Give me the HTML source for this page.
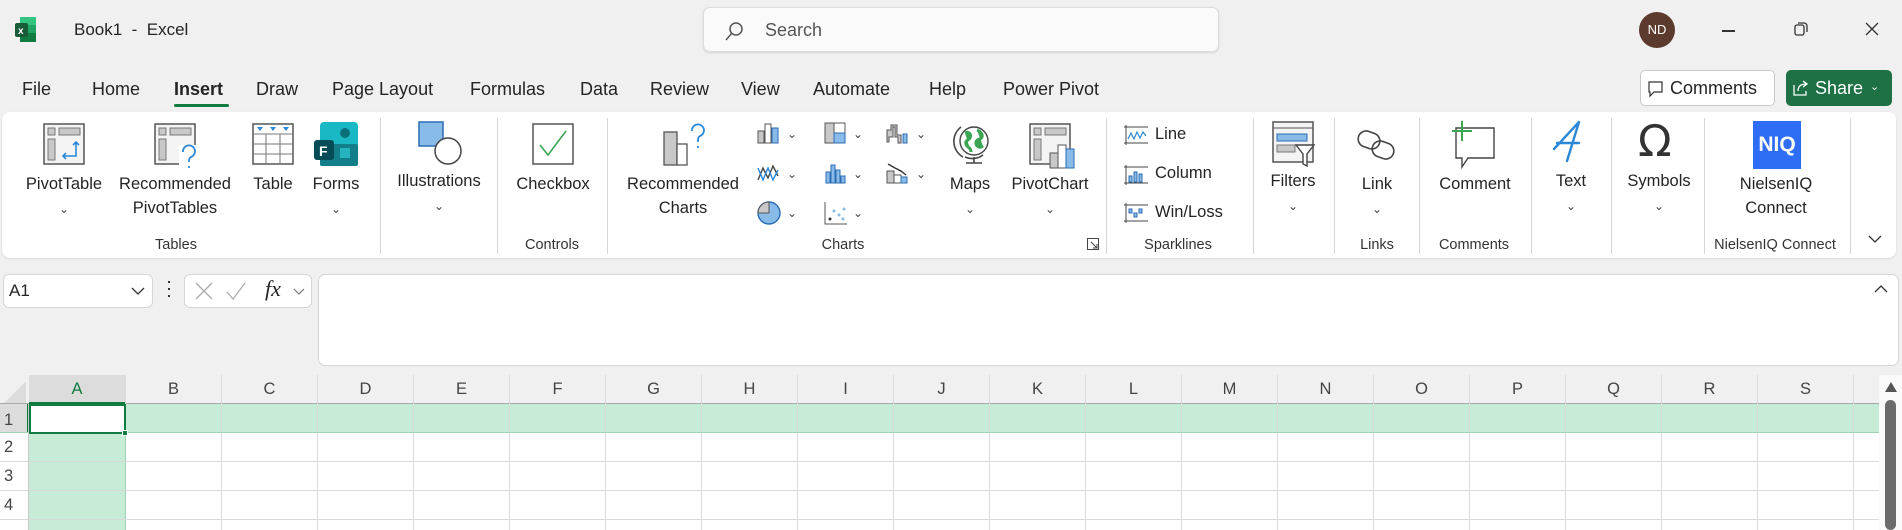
<!DOCTYPE html>
<html><head><meta charset="utf-8"><style>
*{box-sizing:border-box;margin:0;padding:0}
body{width:1902px;height:530px;background:#f0f0f0;font-family:"Liberation Sans",sans-serif;color:#242424;position:relative;overflow:hidden}
.a{position:absolute}
.t{position:absolute;font-size:18px;top:79px;white-space:nowrap}
.l{position:absolute;font-size:16.5px;white-space:nowrap;text-align:center;line-height:24px;transform:translateX(-50%)}
.g{position:absolute;font-size:14.5px;top:237px;white-space:nowrap;transform:translateX(-50%);color:#333}
.sep{position:absolute;top:118px;width:1px;height:136px;background:#d6d6d6}
.ch{font-size:12px;color:#444}
.col{position:absolute;top:375px;height:29px;border-left:1px solid #dadada;font-size:16.5px;text-align:center;line-height:29px;color:#444}
svg{position:absolute;overflow:visible}
</style></head><body>
<!-- title bar -->
<svg style="left:14px;top:16px" width="24" height="28" viewBox="0 0 24 28"><rect x="6" y="1" width="16" height="25" rx="2" fill="#21a366"/><rect x="6" y="1" width="16" height="8" fill="#33c481"/><rect x="6" y="17" width="16" height="9" fill="#107c41"/><rect x="1" y="7" width="13" height="14" rx="2" fill="#185c37"/><text x="4" y="18" font-size="10" font-weight="bold" fill="#fff" font-family="Liberation Sans">x</text></svg>
<div class="a" style="left:74px;top:20px;font-size:17px">Book1&nbsp; - &nbsp;Excel</div>
<div class="a" style="left:703px;top:7px;width:516px;height:45px;background:#fafafa;border:1px solid #dcdcdc;border-radius:7px;box-shadow:0 1px 2px rgba(0,0,0,.12)"></div>
<svg style="left:724px;top:21px" width="20" height="20"><circle cx="12" cy="8" r="6" fill="none" stroke="#555" stroke-width="1.5"/><line x1="8" y1="12" x2="2" y2="19" stroke="#555" stroke-width="1.5"/></svg>
<div class="a" style="left:765px;top:20px;font-size:18px;color:#555">Search</div>
<div class="a" style="left:1639px;top:12px;width:36px;height:36px;border-radius:50%;background:#5c3a2e;color:#fff;font-size:13px;text-align:center;line-height:36px">ND</div>
<div class="a" style="left:1722px;top:30px;width:13px;height:1.5px;background:#333"></div>
<svg style="left:1794px;top:22px" width="14" height="14"><rect x="1" y="3" width="9" height="10" rx="2" fill="none" stroke="#333" stroke-width="1.3"/><path d="M4 1h6a3 3 0 0 1 3 3v6" fill="none" stroke="#333" stroke-width="1.3"/></svg>
<svg style="left:1865px;top:22px" width="14" height="14"><path d="M1 1L13 13M13 1L1 13" stroke="#333" stroke-width="1.3"/></svg>
<!-- tabs -->
<div class="t" style="left:22px">File</div>
<div class="t" style="left:92px">Home</div>
<div class="t" style="left:174px;font-weight:bold">Insert</div>
<div class="a" style="left:174px;top:104px;width:55px;height:3px;border-radius:2px;background:#107c41"></div>
<div class="t" style="left:256px">Draw</div>
<div class="t" style="left:332px">Page Layout</div>
<div class="t" style="left:470px">Formulas</div>
<div class="t" style="left:580px">Data</div>
<div class="t" style="left:650px">Review</div>
<div class="t" style="left:741px">View</div>
<div class="t" style="left:813px">Automate</div>
<div class="t" style="left:929px">Help</div>
<div class="t" style="left:1003px">Power Pivot</div>
<div class="a" style="left:1640px;top:70px;width:135px;height:36px;border:1px solid #c8c8c8;border-radius:5px;background:#fff"></div>
<svg style="left:1648px;top:81px" width="16" height="16"><path d="M1 1h13v10H6l-4 4V11H1z" fill="none" stroke="#333" stroke-width="1.2"/></svg>
<div class="a" style="left:1670px;top:78px;font-size:18px">Comments</div>
<div class="a" style="left:1786px;top:70px;width:106px;height:36px;border-radius:5px;background:#1e7145"></div>
<svg style="left:1792px;top:79px" width="18" height="18"><path d="M2 6v10h12v-4M6 12c0-5 3-7 8-7M11 2l4 3-4 3" fill="none" stroke="#fff" stroke-width="1.3"/></svg>
<div class="a" style="left:1815px;top:78px;font-size:18px;color:#fff">Share</div>
<div class="a" style="left:1870px;top:80px;font-size:11px;color:#fff">&#8964;</div>
<!-- ribbon -->
<div class="a" style="left:2px;top:112px;width:1894px;height:146px;background:#fff;border-radius:8px;box-shadow:0 1px 2px rgba(0,0,0,.1)"></div>
<div class="sep" style="left:380px"></div><div class="sep" style="left:497px"></div><div class="sep" style="left:607px"></div><div class="sep" style="left:1106px"></div><div class="sep" style="left:1253px"></div><div class="sep" style="left:1334px"></div><div class="sep" style="left:1419px"></div><div class="sep" style="left:1531px"></div><div class="sep" style="left:1611px"></div><div class="sep" style="left:1704px"></div><div class="sep" style="left:1850px"></div>
<!-- PivotTable -->
<svg style="left:43px;top:123px" width="42" height="42"><rect x="1" y="1" width="40" height="40" fill="#f4f4f4" stroke="#555" stroke-width="1.5"/><rect x="5" y="5" width="7" height="7" fill="#c8c8c8" stroke="#777"/><rect x="16" y="5" width="21" height="7" fill="#c8c8c8" stroke="#777"/><rect x="5" y="16" width="7" height="21" fill="#c8c8c8" stroke="#777"/><path d="M33 19v14H20M30 22l3-3 3 3M23 30l-3 3 3 3" fill="none" stroke="#2b88d8" stroke-width="1.6"/></svg>
<div class="l" style="left:64px;top:172px">PivotTable<br><span class="ch">&#8964;</span></div>
<svg style="left:154px;top:123px" width="46" height="46"><rect x="1" y="1" width="40" height="40" fill="#f4f4f4" stroke="#555" stroke-width="1.5"/><rect x="5" y="5" width="7" height="7" fill="#c8c8c8" stroke="#777"/><rect x="16" y="5" width="21" height="7" fill="#c8c8c8" stroke="#777"/><rect x="5" y="16" width="7" height="21" fill="#c8c8c8" stroke="#777"/><rect x="25" y="22" width="20" height="24" fill="#fff"/><path d="M29 29a6 6 0 1 1 8 5c-2 1-2 3-2 5M35 43v2" fill="none" stroke="#2b88d8" stroke-width="1.8"/></svg>
<div class="l" style="left:175px;top:172px">Recommended<br>PivotTables</div>
<svg style="left:252px;top:123px" width="42" height="42"><rect x="1" y="1" width="40" height="40" fill="#fff" stroke="#555" stroke-width="1.5"/><path d="M1 11h40M1 21h40M1 31h40M14 11v30M28 11v30" stroke="#777"/><path d="M5 4h6l-3 4zM18 4h6l-3 4zM31 4h6l-3 4z" fill="#2b88d8"/></svg>
<div class="l" style="left:273px;top:172px">Table</div>
<svg style="left:314px;top:122px" width="44" height="44"><rect x="6" y="0" width="38" height="44" rx="4" fill="#1ab8c4"/><rect x="6" y="22" width="38" height="22" rx="2" fill="#117e8a"/><circle cx="31" cy="11" r="5" fill="#0d6f7a"/><rect x="26" y="26" width="10" height="10" fill="#25b3bd"/><rect x="0" y="18" width="20" height="20" rx="3" fill="#064b56"/><text x="5" y="34" font-size="14" font-weight="bold" fill="#fff" font-family="Liberation Sans">F</text></svg>
<div class="l" style="left:336px;top:172px">Forms<br><span class="ch">&#8964;</span></div>
<svg style="left:418px;top:121px" width="44" height="44"><rect x="1" y="1" width="24" height="24" fill="#89bbe8" stroke="#2b6cb5" stroke-width="1.5"/><circle cx="30" cy="30" r="13" fill="#fff" stroke="#444" stroke-width="1.5"/></svg>
<div class="l" style="left:439px;top:169px">Illustrations<br><span class="ch">&#8964;</span></div>
<svg style="left:532px;top:123px" width="42" height="42"><rect x="1" y="1" width="40" height="40" fill="#fff" stroke="#555" stroke-width="1.5"/><path d="M8 22l8 10L34 8" fill="none" stroke="#3aa552" stroke-width="1.6"/></svg>
<div class="l" style="left:553px;top:172px">Checkbox</div>
<!-- Charts -->
<svg style="left:663px;top:122px" width="46" height="44"><rect x="1" y="10" width="13" height="33" fill="#c8c8c8" stroke="#555" stroke-width="1.3"/><rect x="14" y="22" width="10" height="21" fill="#fff" stroke="#555" stroke-width="1.3"/><path d="M29 9a6 6 0 1 1 8 5c-2 1-2 3-2 6M35 24v2" fill="none" stroke="#2b88d8" stroke-width="1.8"/></svg>
<div class="l" style="left:683px;top:172px">Recommended<br>Charts</div>
<svg style="left:757px;top:122px" width="22" height="22"><rect x="1" y="9" width="6" height="12" fill="#c8c8c8" stroke="#555"/><rect x="8" y="2" width="6" height="19" fill="#fff" stroke="#555"/><rect x="15" y="6" width="6" height="15" fill="#89bbe8" stroke="#2b6cb5"/></svg>
<svg style="left:757px;top:162px" width="22" height="22"><path d="M1 18l5-12 5 10 5-12 5 10" fill="none" stroke="#444" stroke-width="1.4"/><path d="M1 6l5 12 5-12 5 12 5-10" fill="none" stroke="#2b88d8" stroke-width="1.4"/></svg>
<svg style="left:757px;top:201px" width="24" height="24"><circle cx="12" cy="12" r="11" fill="#89bbe8" stroke="#2b6cb5" stroke-width="1.4"/><path d="M12 12V1A11 11 0 0 0 1 12z" fill="#c8c8c8" stroke="#555"/></svg>
<svg style="left:824px;top:122px" width="22" height="22"><rect x="1" y="1" width="20" height="20" fill="#c8c8c8" stroke="#555"/><rect x="10" y="1" width="11" height="10" fill="#fff" stroke="#555"/><rect x="10" y="11" width="11" height="10" fill="#89bbe8" stroke="#2b6cb5"/></svg>
<svg style="left:824px;top:162px" width="22" height="22"><path d="M2 10h4v11H2zM7 3h4v18H7zM12 8h4v13h-4zM17 14h4v7h-4z" fill="#89bbe8" stroke="#2b6cb5"/></svg>
<svg style="left:824px;top:201px" width="24" height="24"><path d="M1 1v22h22" fill="none" stroke="#555"/><circle cx="6" cy="18" r="1.5" fill="#333"/><circle cx="10" cy="10" r="1.5" fill="#89bbe8"/><circle cx="15" cy="14" r="1.5" fill="#89bbe8"/><circle cx="20" cy="8" r="1.5" fill="#89bbe8"/><circle cx="19" cy="18" r="1.5" fill="#89bbe8"/></svg>
<svg style="left:886px;top:122px" width="22" height="22"><path d="M1 20V8h4V3h6v10h4v8h-3v-6H9V5H7v10H3v5z" fill="#c8c8c8" stroke="#555"/><rect x="17" y="12" width="4" height="9" fill="#89bbe8" stroke="#2b6cb5"/></svg>
<svg style="left:886px;top:162px" width="22" height="22"><rect x="1" y="9" width="7" height="12" fill="#c8c8c8" stroke="#555"/><rect x="8" y="13" width="7" height="8" fill="#fff" stroke="#555"/><rect x="15" y="15" width="6" height="6" fill="#89bbe8" stroke="#2b6cb5"/><path d="M2 2l7 4 6 3 5 4" stroke="#333" stroke-width="1.4"/></svg>
<div class="a ch" style="left:787px;top:127px">&#8964;</div><div class="a ch" style="left:787px;top:167px">&#8964;</div><div class="a ch" style="left:787px;top:206px">&#8964;</div>
<div class="a ch" style="left:853px;top:127px">&#8964;</div><div class="a ch" style="left:853px;top:167px">&#8964;</div><div class="a ch" style="left:853px;top:206px">&#8964;</div>
<div class="a ch" style="left:916px;top:127px">&#8964;</div><div class="a ch" style="left:916px;top:167px">&#8964;</div>
<svg style="left:953px;top:123px" width="36" height="44"><path d="M8 4a18 18 0 0 0 2 30" fill="none" stroke="#444" stroke-width="1.6"/><circle cx="21" cy="18" r="14" fill="#fff" stroke="#444" stroke-width="1.4"/><path d="M12 10c4-2 7 2 5 5s-5 2-4 6 5 3 5 8M24 7c3 1 6 4 5 7s-5 1-6 5 4 7 7 4" fill="#3aa552" stroke="#3aa552" stroke-width="3"/><path d="M12 34a18 18 0 0 0 18-2M21 34v6M13 40h16" stroke="#444" stroke-width="1.6" fill="none"/></svg>
<div class="l" style="left:970px;top:172px">Maps<br><span class="ch">&#8964;</span></div>
<svg style="left:1029px;top:123px" width="48" height="48"><rect x="1" y="1" width="40" height="40" fill="#f4f4f4" stroke="#555" stroke-width="1.5"/><rect x="5" y="5" width="7" height="7" fill="#c8c8c8" stroke="#777"/><rect x="16" y="5" width="21" height="7" fill="#c8c8c8" stroke="#777"/><rect x="5" y="16" width="7" height="21" fill="#c8c8c8" stroke="#777"/><rect x="21" y="30" width="8" height="15" fill="#c8c8c8" stroke="#555"/><rect x="29" y="22" width="8" height="23" fill="#fff" stroke="#555"/><rect x="37" y="26" width="8" height="19" fill="#89bbe8" stroke="#2b6cb5"/></svg>
<div class="l" style="left:1050px;top:172px">PivotChart<br><span class="ch">&#8964;</span></div>
<svg style="left:1087px;top:238px" width="12" height="12"><rect x="0.5" y="0.5" width="11" height="11" fill="none" stroke="#444"/><path d="M4 4l6 6M6 10h4V6" fill="none" stroke="#444"/></svg>
<div class="g" style="left:843px">Charts</div>
<!-- Sparklines -->
<svg style="left:1124px;top:125px" width="24" height="20"><path d="M0 2h24M2 0v20M0 18h24" stroke="#444"/><path d="M4 14l3-6 3 6 3-7 3 6 3-6 3 4" fill="none" stroke="#2b88d8" stroke-width="1.2"/></svg>
<svg style="left:1124px;top:165px" width="24" height="20"><path d="M0 2h24M2 0v20M0 18h24" stroke="#444"/><path d="M5 11h3v6H5zM10 7h3v10h-3zM15 9h3v8h-3z" fill="#89bbe8" stroke="#2b6cb5"/></svg>
<svg style="left:1124px;top:203px" width="24" height="20"><path d="M0 2h24M2 0v20M0 18h24" stroke="#444"/><path d="M5 6h3v4H5zM10 10h3v4h-3zM15 6h3v4h-3z" fill="#89bbe8" stroke="#2b6cb5"/></svg>
<div class="a" style="left:1155px;top:125px;font-size:16.5px">Line</div>
<div class="a" style="left:1155px;top:164px;font-size:16.5px">Column</div>
<div class="a" style="left:1155px;top:203px;font-size:16.5px">Win/Loss</div>
<div class="g" style="left:1178px">Sparklines</div>
<!-- Filters -->
<svg style="left:1272px;top:121px" width="44" height="46"><rect x="1" y="1" width="40" height="40" fill="#f4f4f4" stroke="#555" stroke-width="1.5"/><path d="M1 7h40" stroke="#555"/><rect x="5" y="13" width="30" height="7" fill="#89bbe8" stroke="#2b6cb5"/><rect x="5" y="24" width="18" height="7" fill="#c8c8c8" stroke="#777"/><path d="M24 24h18l-7 9v12l-4-2V33z" fill="#fff" stroke="#444" stroke-width="1.4"/></svg>
<div class="l" style="left:1293px;top:169px">Filters<br><span class="ch">&#8964;</span></div>
<!-- Link -->
<svg style="left:1356px;top:128px" width="44" height="34"><rect x="2" y="4" width="22" height="16" rx="8" fill="none" stroke="#444" stroke-width="1.6" transform="rotate(20 13 12)"/><rect x="16" y="14" width="22" height="16" rx="8" fill="none" stroke="#444" stroke-width="1.6" transform="rotate(20 27 22)"/></svg>
<div class="l" style="left:1377px;top:172px">Link<br><span class="ch">&#8964;</span></div>
<div class="g" style="left:1377px">Links</div>
<!-- Comment -->
<svg style="left:1450px;top:120px" width="48" height="48"><path d="M6 8h38v30H18l-6 9v-9H6z" fill="#fff" stroke="#444" stroke-width="1.4"/><path d="M12 1v20M2 11h20" stroke="#3aa552" stroke-width="2"/></svg>
<div class="l" style="left:1475px;top:172px">Comment</div>
<div class="g" style="left:1474px">Comments</div>
<!-- Text -->
<svg style="left:1553px;top:121px" width="36" height="42"><path d="M26 1L14 40M26 1L1 28M4 22h22" fill="none" stroke="#2b88d8" stroke-width="2.4" stroke-linecap="round"/></svg>
<div class="l" style="left:1571px;top:169px">Text<br><span class="ch">&#8964;</span></div>
<!-- Symbols -->
<div class="a" style="left:1638px;top:118px;font-size:44px;color:#333;font-family:'DejaVu Sans',sans-serif;line-height:48px">Ω</div>
<div class="l" style="left:1659px;top:169px">Symbols<br><span class="ch">&#8964;</span></div>
<!-- NIQ -->
<div class="a" style="left:1753px;top:121px;width:48px;height:48px;background:#2e6ef7;color:#fff;font-weight:bold;font-size:21px;line-height:48px;text-align:center">NIQ</div>
<div class="l" style="left:1776px;top:172px">NielsenIQ<br>Connect</div>
<div class="g" style="left:1775px">NielsenIQ Connect</div>
<svg style="left:1868px;top:234px" width="14" height="10"><path d="M1 2l6 6 6-6" fill="none" stroke="#333" stroke-width="1.3"/></svg>
<div class="g" style="left:176px">Tables</div>
<div class="g" style="left:552px">Controls</div>
<!-- formula bar -->
<div class="a" style="left:3px;top:274px;width:150px;height:34px;background:#fff;border:1px solid #d6d6d6;border-radius:6px"></div>
<div class="a" style="left:9px;top:281px;font-size:17px">A1</div>
<svg style="left:131px;top:287px" width="14" height="9"><path d="M1 1l6 6 6-6" fill="none" stroke="#333" stroke-width="1.3"/></svg>
<div class="a" style="left:168px;top:281px;width:2px;height:2px;background:#333;box-shadow:0 7px 0 #333,0 14px 0 #333"></div>
<div class="a" style="left:184px;top:274px;width:128px;height:34px;background:#fff;border:1px solid #d6d6d6;border-radius:6px"></div>
<svg style="left:195px;top:282px" width="18" height="18"><path d="M1 1l16 16M17 1L1 17" stroke="#aaa" stroke-width="1.3"/></svg>
<svg style="left:226px;top:282px" width="20" height="18"><path d="M1 10l6 7L19 1" fill="none" stroke="#aaa" stroke-width="1.3"/></svg>
<div class="a" style="left:265px;top:276px;font-size:22px;font-style:italic;font-family:'Liberation Serif',serif">fx</div>
<svg style="left:293px;top:288px" width="12" height="8"><path d="M1 1l5 5 5-5" fill="none" stroke="#777" stroke-width="1.2"/></svg>
<div class="a" style="left:318px;top:274px;width:1581px;height:92px;background:#fff;border:1px solid #d6d6d6;border-radius:7px"></div>
<svg style="left:1874px;top:284px" width="14" height="9"><path d="M1 8l6-6 6 6" fill="none" stroke="#333" stroke-width="1.3"/></svg>
<!-- grid -->
<div class="a" style="left:0;top:404px;width:1879px;height:126px;background:#fff"></div>
<div class="a" style="left:29px;top:404px;width:1850px;height:29px;background:#c6ebd7;border-bottom:1px solid #9fd3b5"></div>
<div class="a" style="left:29px;top:433px;width:96px;height:97px;background:#c6ebd7"></div>
<div class="a" style="left:0;top:403px;width:1879px;height:1px;background:#a8a8a8"></div>
<div class="a" style="left:29px;top:375px;width:96px;height:29px;background:#dcdcdc;border-bottom:2px solid #107c41"></div>
<svg style="left:4px;top:381px" width="22" height="22"><path d="M22 0v22H0z" fill="#dcdcdc"/></svg>
<div class="a" style="left:0;top:404px;width:29px;height:29px;background:#dcdcdc;border-right:2px solid #107c41"></div>
<div id="cols"></div>
<div class="a" style="left:0;top:409px;width:29px;font-size:16.5px;line-height:22px;color:#444;padding-left:4px">1</div>
<div class="a" style="left:0;top:438px;width:29px;font-size:16.5px;color:#444;padding-left:4px">2</div>
<div class="a" style="left:0;top:467px;width:29px;font-size:16.5px;color:#444;padding-left:4px">3</div>
<div class="a" style="left:0;top:496px;width:29px;font-size:16.5px;color:#444;padding-left:4px">4</div>
<div class="a" style="left:0;top:432px;width:1879px;height:1px;background:#9fd3b5"></div>
<div class="a" style="left:0;top:461px;width:1879px;height:1px;background:#dadada"></div>
<div class="a" style="left:0;top:490px;width:1879px;height:1px;background:#dadada"></div>
<div class="a" style="left:0;top:519px;width:1879px;height:1px;background:#dadada"></div>
<div class="a" style="left:28px;top:404px;width:1px;height:126px;background:#c8c8c8"></div>
<div class="a" style="left:29px;top:404px;width:97px;height:30px;border:2px solid #107c41;background:#fff"></div>
<div class="a" style="left:122px;top:430px;width:6px;height:6px;background:#107c41;border:1px solid #fff"></div>
<div class="a" style="left:1879px;top:375px;width:23px;height:155px;background:#fafafa"></div>
<svg style="left:1885px;top:382px" width="12" height="10"><path d="M6 0l6 10H0z" fill="#555"/></svg>
<div class="a" style="left:1885px;top:400px;width:11px;height:130px;border-radius:6px;background:#6b6b6b"></div>
<script>
var L="ABCDEFGHIJKLMNOPQRS",h="";
for(var i=0;i<20;i++){var x=29+i*96;var w=i<19?96:1879-x;
h+='<div class="col" style="left:'+x+'px;width:'+w+'px;'+(i==0?'color:#107c41;border-left:none':'')+'">'+(L[i]||'')+'</div>';
if(i>0)h+='<div class="a" style="left:'+x+'px;top:404px;width:1px;height:126px;background:'+(i==1?'#9fd3b5':'#dadada')+'"></div>';}
document.getElementById('cols').innerHTML=h;
</script>
</body></html>
